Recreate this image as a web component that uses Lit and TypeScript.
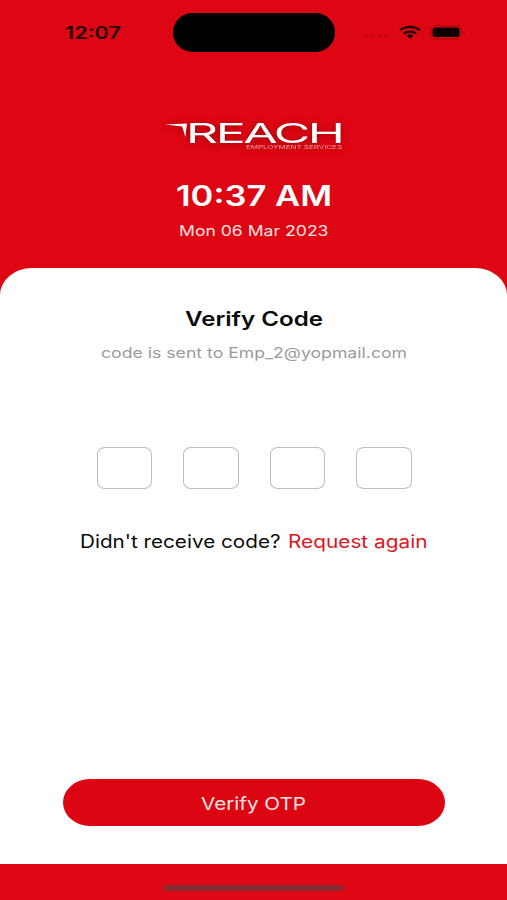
import { LitElement, html, css, svg } from "lit";
import { customElement, property } from "lit/decorators.js";

/** One line of text set to an exact measure, as the wide brand face would be. */
@customElement("wide-text")
class WideText extends LitElement {
  @property() text = "";
  @property({ type: Number }) width = 100;
  @property({ type: Number }) size = 16;
  @property({ type: Number }) weight = 400;

  static styles = css`
    :host { display: block; flex: none; }
    svg { display: block; overflow: visible; }
    text { font-family: Inter, "Liberation Sans", sans-serif; fill: currentColor; }
  `;

  render() {
    const h = Math.round(this.size * 1.25);
    return html`<svg width=${this.width} height=${h} role="img" aria-label=${this.text}>
      ${svg`<text x="0" y=${this.size} font-size=${this.size} font-weight=${this.weight}
        textLength=${this.width} lengthAdjust="spacingAndGlyphs">${this.text}</text>`}
    </svg>`;
  }
}

@customElement("status-bar")
class StatusBar extends LitElement {
  static styles = css`
    :host { display: grid; grid-template-columns: 173px 162px 1fr; height: 64px; align-items: center; color: #240003; }
    .time { padding: 0 0 0 65px; }
    .island { height: 39px; border-radius: 20px; background: #000; }
    .icons { display: flex; align-items: center; padding-left: 29px; }
    svg { display: block; }
    .dots { margin-top: 8px; }
    .wifi { margin-left: 10px; }
    .battery { margin-left: 9px; }
  `;
  render() {
    return html`
      <div class="time"><wide-text text="12:07" width="56" size="17" weight="600"></wide-text></div>
      <div class="island"></div>
      <div class="icons">
        <svg class="dots" width="25" height="4" fill="#b5060f">
          <rect x="0" y=".8" width="4.2" height="2.2" rx="1.1" /><rect x="7" y=".8" width="4.2" height="2.2" rx="1.1" />
          <rect x="14" y=".8" width="4.2" height="2.2" rx="1.1" /><rect x="20.5" y=".8" width="4.2" height="2.2" rx="1.1" />
        </svg>
        <svg class="wifi" width="22" height="14" viewBox="0 0 22 14" fill="none" stroke="#170002" stroke-width="2.4">
          <path d="M1.2 5.2C6.6.7 15.4.7 20.8 5.2M4.9 8.6c3.4-2.7 8.8-2.7 12.2 0" />
          <path d="M7.6 10.8c2-1.6 4.8-1.6 6.8 0L11 13.8z" fill="#170002" stroke="none" />
        </svg>
        <svg class="battery" width="36" height="15" viewBox="0 0 36 15">
          <rect x=".7" y=".7" width="31" height="13.2" rx="4.2" fill="none" stroke="#ad050e" stroke-width="1.2" />
          <rect x="2.6" y="2.5" width="27" height="9.6" rx="2.8" fill="#0c0001" />
          <path d="M33.3 5.6c1.8.7 1.8 2.8 0 3.5z" fill="#9b050d" />
        </svg>
      </div>`;
  }
}

@customElement("reach-logo")
class ReachLogo extends LitElement {
  static styles = css`
    :host { display: block; }
    svg { display: block; overflow: visible; filter: drop-shadow(0 1px 3px rgba(70, 0, 0, 0.5)); }
    text { font-family: Inter, "Liberation Sans", sans-serif; }
    .name { letter-spacing: -1.3px; }
  `;
  render() {
    return html`<svg width="178" height="30" viewBox="0 0 178 30">
      <path d="M0 4.4 22 3.6 20.3 17 17.2 6.4Z" fill="#fff" />
      <text class="name" x="21" y="23" font-size="27" font-weight="400" fill="#fff" textLength="156.5" lengthAdjust="spacingAndGlyphs">REACH</text>
      <text x="81" y="28.7" font-size="5.4" fill="#ff9a9f" textLength="96" lengthAdjust="spacingAndGlyphs">EMPLOYMENT SERVICES</text>
    </svg>`;
  }
}

@customElement("app-root")
class AppRoot extends LitElement {
  static styles = css`
    :host { display: flex; flex-direction: column; width: 507px; height: 900px; background: #de0612; overflow: hidden; }
    header { height: 268px; display: flex; flex-direction: column; align-items: center; color: #fff; }
    status-bar { width: 100%; }
    reach-logo { margin: 56px 0 0 1px; }
    .clock { margin-top: 27px; }
    .date { margin-top: 8px; color: #ffe3e4; }
    main { height: 596px; box-sizing: border-box; background: #fff; border-radius: 32px 32px 0 0 / 27px 27px 0 0; display: flex; flex-direction: column; align-items: center; color: #0b0b0b; }
    .title { margin-top: 38px; }
    .sent { margin-top: 12px; color: #9b9b9b; }
    .code { display: flex; gap: 31px; margin: 86px 0 0 1px; }
    .cell { width: 55.5px; height: 42px; box-sizing: border-box; border: 1.5px solid #bdbdbd; border-radius: 8px / 7px; }
    .resend { display: flex; gap: 7px; margin-top: 41px; }
    .again { color: #dc1622; }
    .submit { all: unset; width: 382px; height: 47px; margin-top: auto; margin-bottom: 38px; border-radius: 27px / 23.5px; background: #dc0612; color: #ffe3e4; display: flex; justify-content: center; align-items: center; }
    footer { flex: 1; display: flex; justify-content: center; align-items: flex-start; }
    .home { width: 180px; height: 6px; margin-top: 21px; border-radius: 3px; background: #852b33; }
  `;

  render() {
    return html`
      <header>
        <status-bar></status-bar>
        <reach-logo></reach-logo>
        <wide-text class="clock" text="10:37 AM" width="156" size="28.5" weight="600"></wide-text>
        <wide-text class="date" text="Mon 06 Mar 2023" width="149.5" size="14.5"></wide-text>
      </header>
      <main>
        <wide-text class="title" text="Verify Code" width="138" size="20" weight="600"></wide-text>
        <wide-text class="sent" text="code is sent to Emp_2@yopmail.com" width="306" size="14.5"></wide-text>
        <div class="code">${[0, 1, 2, 3].map(() => html`<div class="cell"></div>`)}</div>
        <div class="resend">
          <wide-text text="Didn't receive code?" width="200.5" size="18"></wide-text>
          <wide-text class="again" text="Request again" width="139.5" size="18"></wide-text>
        </div>
        <button class="submit"><wide-text text="Verify OTP" width="105" size="17.5"></wide-text></button>
      </main>
      <footer><div class="home"></div></footer>`;
  }
}
